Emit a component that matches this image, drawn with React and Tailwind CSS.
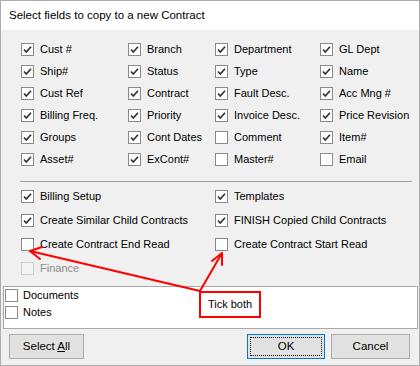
import React from 'react'

const top = [
    ['Cust #', true], ['Branch', true], ['Department', true], ['GL Dept', true],
    ['Ship#', true], ['Status', true], ['Type', true], ['Name', true],
    ['Cust Ref', true], ['Contract', true], ['Fault Desc.', true], ['Acc Mng #', true],
    ['Billing Freq.', true], ['Priority', true], ['Invoice Desc.', true], ['Price Revision', true],
    ['Groups', true], ['Cont Dates', true], ['Comment', false], ['Item#', true],
    ['Asset#', true], ['ExCont#', true], ['Master#', false], ['Email', false],
]

const lower = [
    ['Billing Setup', true], ['Templates', true],
    ['Create Similar Child Contracts', true], ['FINISH Copied Child Contracts', true],
    ['Create Contract End Read', false], ['Create Contract Start Read', false],
    ['Finance', false, true],
]

const Box = ({ checked, disabled }) => (
    <span className={disabled
        ? 'w-[13px] h-[13px] shrink-0 border border-[#cccccc] bg-[#f4f4f4]'
        : 'w-[13px] h-[13px] shrink-0 border border-[#8a8a8a] bg-white flex items-center justify-center'}>
        {checked && (
            <svg width="11" height="11" viewBox="0 0 11 11">
                <polyline points="2,5.5 4.3,8 9,2.8" fill="none" stroke="#333" strokeWidth="1.7" />
            </svg>
        )}
    </span>
)

const Check = ({ label, checked, disabled, gap = 'gap-[6px]' }) => (
    <div className={`flex items-center ${gap}`}>
        <Box checked={checked} disabled={disabled} />
        <span className={disabled ? 'text-[#8d8d8d]' : 'text-black'}>{label}</span>
    </div>
)

const App = () => {
    return (
        <div className="relative w-[420px] h-[366px] bg-[#f0f0f0] border border-[#adadad] text-[11px] leading-none font-['Liberation_Sans',Arial,sans-serif] overflow-hidden">
            <div className="h-[29px] bg-white flex items-center pl-[8px] pt-[1px] text-[11.5px] text-black">
                Select fields to copy to a new Contract
            </div>

            <div className="pt-[8px] pl-[20px] grid grid-cols-[107px_87px_105px_1fr] auto-rows-[22px]">
                {top.map(([l, c]) => (
                    <div key={l} className="flex items-center">
                        <Check label={l} checked={c} />
                    </div>
                ))}
            </div>

            <div className="mt-[11px] ml-[19px] mr-[7px] h-px bg-[#a0a0a0]" />

            <div className="mt-[2px] pl-[20px] grid grid-cols-[194px_1fr] auto-rows-[24px]">
                {lower.map(([l, c, d]) => (
                    <div key={l} className="flex items-center">
                        <Check label={l} checked={c} disabled={d} />
                    </div>
                ))}
            </div>

            <div className="mt-[6px] ml-[2px] mr-[1px] h-[43px] bg-white border border-[#a8a8a8] pl-[1px] flex flex-col">
                <div className="h-[17px] flex items-center"><Check label="Documents" gap="gap-[5px]" /></div>
                <div className="h-[17px] flex items-center"><Check label="Notes" gap="gap-[5px]" /></div>
            </div>

            <div className="mt-[5px] flex pl-[8px] pr-[9px] text-[11.5px]">
                <button className="w-[75px] h-[25px] bg-[#e1e1e1] border border-[#adadad] text-black">
                    Select <span className="underline">A</span>ll
                </button>
                <button className="ml-auto w-[78px] h-[25px] bg-[#e1e1e1] border border-[#0078d7] p-[2px] text-black">
                    <span className="w-full h-full border border-dotted border-black flex items-center justify-center">OK</span>
                </button>
                <button className="ml-[6px] w-[79px] h-[25px] bg-[#e1e1e1] border border-[#adadad] text-black">
                    Cancel
                </button>
            </div>

            <svg className="absolute left-[-1px] top-[-1px] pointer-events-none" width="420" height="366" viewBox="0 0 420 366">
                <g fill="none" stroke="#ff0000" strokeWidth="2" strokeLinecap="round" strokeLinejoin="round">
                    <line x1="200" y1="291" x2="30" y2="251" />
                    <polyline points="42,247 30,251 40,259" />
                    <line x1="200" y1="291" x2="222" y2="253" />
                    <polyline points="212,261 222,253 222,265" />
                </g>
            </svg>

            <div className="absolute left-[198px] top-[290px] w-[62px] h-[27px] bg-white border-2 border-[#ff0000] flex items-center justify-center text-black">
                Tick both
            </div>
        </div>
    )
}

export default App
